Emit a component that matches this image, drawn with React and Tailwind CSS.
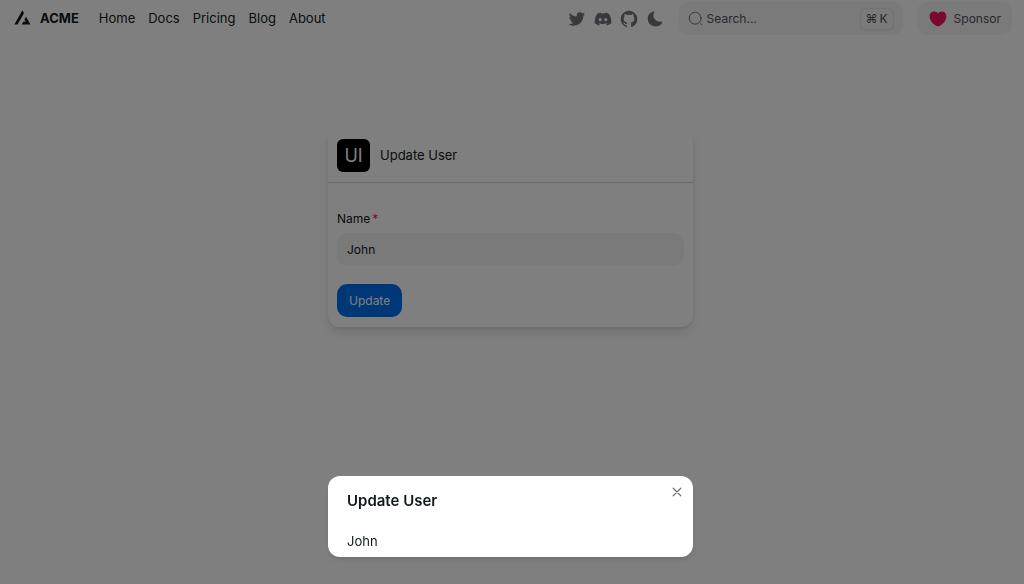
import { useState } from 'react';
import { BiLogoGithub, BiLogoTwitter } from 'react-icons/bi';

const NAV_ITEMS = ['Home', 'Docs', 'Pricing', 'Blog', 'About'];

const Logo = () => (
  <svg className="w-[29px] h-[29px]" viewBox="0 0 32 32" fill="none">
    <path
      clipRule="evenodd"
      fillRule="evenodd"
      fill="currentColor"
      d="M17.6482 10.1305L15.8785 7.02583L7.02979 22.5499H10.5278L17.6482 10.1305ZM19.8798 14.0457L18.11 17.1983L19.394 19.4511H16.8453L15.1056 22.5499H24.7272L19.8798 14.0457Z"
    />
  </svg>
);

const DiscordIcon = () => (
  <svg className="size-5" viewBox="0 0 24 24" fill="currentColor">
    <path d="M14.82 4.26a10.14 10.14 0 0 0-.53 1.1 14.66 14.66 0 0 0-4.58 0 10.14 10.14 0 0 0-.53-1.1 16 16 0 0 0-4.13 1.3 17.33 17.33 0 0 0-3 11.59 16.6 16.6 0 0 0 5.07 2.59A12.89 12.89 0 0 0 8.23 18a9.65 9.65 0 0 1-1.71-.83 3.39 3.39 0 0 0 .42-.33 11.66 11.66 0 0 0 10.12 0q.21.18.42.33a10.84 10.84 0 0 1-1.71.84 12.41 12.41 0 0 0 1.08 1.78 16.44 16.44 0 0 0 5.06-2.59 17.22 17.22 0 0 0-3-11.59 16.09 16.09 0 0 0-4.09-1.35zM8.68 14.81a1.94 1.94 0 0 1-1.8-2 1.93 1.93 0 0 1 1.8-2 1.93 1.93 0 0 1 1.8 2 1.93 1.93 0 0 1-1.8 2zm6.64 0a1.94 1.94 0 0 1-1.8-2 1.93 1.93 0 0 1 1.8-2 1.92 1.92 0 0 1 1.8 2 1.92 1.92 0 0 1-1.8 2z" />
  </svg>
);

const MoonIcon = () => (
  <svg className="size-[18px]" viewBox="0 0 24 24" fill="currentColor">
    <path d="M21.53 15.93c-.16-.27-.61-.69-1.73-.49a8.46 8.46 0 01-1.88.13 8.409 8.409 0 01-5.91-2.82 8.068 8.068 0 01-1.44-8.66c.44-1.01.13-1.54-.09-1.76s-.77-.55-1.83-.11a10.318 10.318 0 00-6.32 10.21 10.475 10.475 0 007.04 8.99 10 10 0 002.89.55c.16.01.32.02.48.02a10.5 10.5 0 008.47-4.27c.67-.93.49-1.519.32-1.79z" />
  </svg>
);

const SearchIcon = () => (
  <svg className="size-[15px] shrink-0 text-zinc-500" viewBox="0 0 24 24" fill="none" stroke="currentColor" strokeWidth="1.6" strokeLinecap="round" strokeLinejoin="round">
    <circle cx="11.5" cy="11.5" r="9.5" />
    <path d="M22 22L20 20" />
  </svg>
);

const HeartIcon = () => (
  <svg className="size-5 text-[#f31260]" viewBox="0 0 24 24" fill="currentColor">
    <path d="M12.62 20.81c-.34.12-.9.12-1.24 0C8.48 19.82 2 15.69 2 8.69 2 5.6 4.49 3.1 7.56 3.1c1.82 0 3.43.88 4.44 2.24a5.53 5.53 0 0 1 4.44-2.24C19.51 3.1 22 5.6 22 8.69c0 7-6.48 11.13-9.38 12.12Z" />
  </svg>
);

const Navbar = () => (
  <header className="flex items-center justify-between h-[37px] pl-2 pr-[9px]">
    <div className="flex items-center gap-5">
      <a href="#" className="flex items-center gap-[3px]">
        <Logo />
        <span className="text-[13px] font-bold">ACME</span>
      </a>
      <nav className="flex gap-[13px] text-[13px]">
        {NAV_ITEMS.map((item) => (
          <a key={item} href="#">{item}</a>
        ))}
      </nav>
    </div>
    <div className="flex items-center gap-[14px]">
      <div className="flex items-center gap-[6px] text-zinc-500">
        <a href="#" aria-label="Twitter"><BiLogoTwitter className="size-5" /></a>
        <a href="#" aria-label="Discord"><DiscordIcon /></a>
        <a href="#" aria-label="Github"><BiLogoGithub className="size-5" /></a>
        <button type="button" aria-label="Switch to dark mode" className="px-px"><MoonIcon /></button>
      </div>
      <label className="flex items-center gap-1 w-56 h-[33px] px-[9px] rounded-[10px] bg-zinc-100">
        <SearchIcon />
        <input
          type="search"
          aria-label="Search"
          placeholder="Search..."
          className="flex-1 min-w-0 text-xs outline-none placeholder:text-zinc-600"
        />
        <kbd className="flex items-center gap-[2px] h-[22px] px-[5px] rounded-md border border-zinc-200 bg-zinc-100 font-[Inter,sans-serif] text-xs text-zinc-600 shadow-xs">
          <abbr title="Command" className="no-underline">⌘</abbr>
          <span>K</span>
        </kbd>
      </label>
      <a href="#" className="flex items-center gap-[6px] h-[33px] px-[11px] rounded-[10px] bg-zinc-100 text-xs text-zinc-600">
        <HeartIcon />
        Sponsor
      </a>
    </div>
  </header>
);

const UserCard = ({ name, onChange, onSubmit }) => (
  <section className="w-full max-w-[365px] rounded-xl bg-white shadow-[0_6px_12px_rgba(0,0,0,0.1),0_2px_3px_rgba(0,0,0,0.06)]">
    <div className="flex items-center gap-[10px] px-[9px] py-[10px]">
      <div className="flex items-center justify-center size-[33px] rounded-md bg-black text-white text-lg">UI</div>
      <h1 className="text-[13px]">Update User</h1>
    </div>
    <hr className="border-zinc-300" />
    <form onSubmit={onSubmit} className="flex flex-col items-start px-[9px] pt-7 pb-[10px]">
      <label htmlFor="name" className="text-xs mb-[6px]">
        Name<span className="text-[#f31260] ml-[2px]">*</span>
      </label>
      <input
        id="name"
        type="text"
        value={name}
        onChange={onChange}
        className="w-full h-[33px] px-[10px] mb-[18px] rounded-[10px] bg-zinc-100 text-xs outline-none"
      />
      <button type="submit" className="h-[33px] px-3 rounded-[10px] bg-[#006fee] text-white text-xs">
        Update
      </button>
    </form>
  </section>
);

const UserModal = ({ name, onClose }) => (
  <div className="fixed inset-0 z-50 flex items-end justify-center bg-black/50 pb-[27px] pr-[3px]">
    <div role="dialog" aria-modal="true" aria-labelledby="modal-title" className="relative w-full max-w-[365px] rounded-xl bg-white shadow-md">
      <button type="button" aria-label="Close" onClick={onClose} className="absolute top-[9px] right-[9px] p-[2px] text-zinc-500">
        <svg className="size-[10px]" viewBox="0 0 24 24" fill="none" stroke="currentColor" strokeWidth="3" strokeLinecap="round">
          <path d="M21 3L3 21M3 3l18 18" />
        </svg>
      </button>
      <h2 id="modal-title" className="px-[19px] py-[13px] text-[15px] leading-[23px] font-semibold">Update User</h2>
      <p className="px-[19px] py-[6px] text-[13px] leading-5">{name}</p>
    </div>
  </div>
);

export default function App() {
  const [name, setName] = useState('John');
  const [open, setOpen] = useState(true);

  const handleSubmit = (e) => {
    e.preventDefault();
    setOpen(true);
  };

  return (
    <div className="min-h-screen bg-white pr-[3px] font-[Inter,sans-serif] text-[#11181c]">
      <Navbar />
      <main className="flex justify-center pt-[92px]">
        <UserCard name={name} onChange={(e) => setName(e.target.value)} onSubmit={handleSubmit} />
      </main>
      {open && <UserModal name={name} onClose={() => setOpen(false)} />}
    </div>
  );
}
